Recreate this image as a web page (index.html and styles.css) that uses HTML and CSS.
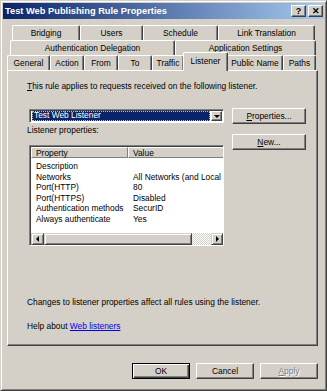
FILE: index.html
```html
<!DOCTYPE html>
<html lang="en">
<head>
    <meta charset="UTF-8">
    <title>Test Web Publishing Rule Properties</title>
    <link rel="stylesheet" href="styles.css">
</head>
<body>
    <div class="window">
        <div class="titlebar">
            <span class="title">Test Web Publishing Rule Properties</span>
            <div class="caption-btns">
                <div class="cap-btn">?</div>
                <div class="cap-btn">&#x2715;</div>
            </div>
        </div>

        <!-- tabs -->
        <div class="tabs">
            <div class="tab-row r1">
                <div class="tab w68">Bridging</div>
                <div class="tab w63">Users</div>
                <div class="tab w75">Schedule</div>
                <div class="tab w97">Link Translation</div>
            </div>
            <div class="tab-row r2">
                <div class="tab w165">Authentication Delegation</div>
                <div class="tab w141">Application Settings</div>
            </div>
            <div class="tab-row r3">
                <div class="tab w43">General</div>
                <div class="tab w34">Action</div>
                <div class="tab w34">From</div>
                <div class="tab w34">To</div>
                <div class="tab w32">Traffic</div>
                <div class="tab w43 active">Listener</div>
                <div class="tab w56">Public Name</div>
                <div class="tab w33">Paths</div>
            </div>
        </div>

        <div class="panel">
            <p class="intro"><u>T</u>his rule applies to requests received on the following listener.</p>

            <div class="listener-area">
                <div class="left-col">
                    <div class="combo">
                        <div class="combo-value"><span>Test Web Listener</span></div>
                        <div class="combo-arrow"><span class="tri-down"></span></div>
                    </div>
                    <div class="label">Listener properties:</div>
                    <div class="listview">
                        <div class="lv-header">
                            <div class="lv-col c1">Property</div>
                            <div class="lv-col c2">Value</div>
                        </div>
                        <div class="lv-body">
                            <div class="lv-row"><span class="c1">Description</span><span class="c2"></span></div>
                            <div class="lv-row"><span class="c1">Networks</span><span class="c2">All Networks (and Local</span></div>
                            <div class="lv-row"><span class="c1">Port(HTTP)</span><span class="c2">80</span></div>
                            <div class="lv-row"><span class="c1">Port(HTTPS)</span><span class="c2">Disabled</span></div>
                            <div class="lv-row"><span class="c1">Authentication methods</span><span class="c2">SecurID</span></div>
                            <div class="lv-row"><span class="c1">Always authenticate</span><span class="c2">Yes</span></div>
                        </div>
                        <div class="hscroll">
                            <div class="sb-btn"><span class="tri-left"></span></div>
                            <div class="sb-thumb"></div>
                            <div class="sb-track"></div>
                            <div class="sb-btn"><span class="tri-right"></span></div>
                        </div>
                    </div>
                </div>
                <div class="right-col">
                    <div class="btn"><u>P</u>roperties...</div>
                    <div class="btn"><u>N</u>ew...</div>
                </div>
            </div>

            <p class="note">Changes to listener properties affect all rules using the listener.</p>
            <p class="help">Help about <a href="#">Web listeners</a></p>
        </div>

        <div class="footer">
            <div class="btn default">OK</div>
            <div class="btn">Cancel</div>
            <div class="btn disabled"><u>A</u>pply</div>
        </div>
    </div>
</body>
</html>
```

FILE: styles.css
```css
*{
    padding: 0;
    margin: 0;
    box-sizing: border-box;
}
body{
    font-family: "Liberation Sans", Arial, sans-serif;
    font-size: 8.4px;
    color: #000;
    background: #D4D0C8;
}
/* 窗口外框 */
.window{
    width: 327px;
    height: 391px;
    background: #D4D0C8;
    border: 1px solid;
    border-color: #D4D0C8 #404040 #404040 #D4D0C8;
    box-shadow: inset 1px 1px #fff, inset -1px -1px #808080;
    padding: 2px;
}
/* 标题栏 */
.titlebar{
    height: 16px;
    display: flex;
    align-items: center;
    justify-content: space-between;
    padding-left: 2px;
    background: linear-gradient(to right, #0A246A, #A6CAF0);
}
.title{
    color: #fff;
    font-weight: bold;
    font-size: 9.3px;
}
.caption-btns{
    display: flex;
    gap: 2px;
    margin-right: 1px;
}
.cap-btn{
    width: 15px;
    height: 12px;
    background: #D4D0C8;
    border: 1px solid;
    border-color: #fff #404040 #404040 #fff;
    box-shadow: inset -1px -1px #808080;
    font-size: 9px;
    font-weight: bold;
    line-height: 10px;
    text-align: center;
}

/* 选项卡 */
.tabs{
    margin-top: 6px;
}
.tab-row{
    display: flex;
    height: 15px;
}
.r1{ padding-left: 9px; }
.r2{ padding-left: 7px; }
.r3{ padding-left: 4px; }
.tab{
    height: 15px;
    line-height: 14px;
    text-align: center;
    white-space: nowrap;
    border-top: 1px solid #fff;
    border-left: 1px solid #fff;
    border-right: 1px solid #404040;
    box-shadow: inset -1px 0 #808080;
    border-top-left-radius: 2px;
    border-top-right-radius: 2px;
}
.w68{ width: 68px; }
.w63{ width: 63px; }
.w75{ width: 75px; }
.w97{ width: 97px; }
.w165{ width: 165px; }
.w141{ width: 141px; }
.w43{ width: 43px; }
.w34{ width: 34px; }
.w32{ width: 32px; }
.w56{ width: 56px; }
.w33{ width: 33px; }
.tab.active{
    position: relative;
    z-index: 1;
    height: 19px;
    margin: -3px -1px -1px -1px;
    width: 45px;
    line-height: 16px;
    background: #D4D0C8;
}

/* 面板 */
.panel{
    margin: 0 6px 0 4px;
    height: 276px;
    border: 1px solid;
    border-color: #fff #404040 #404040 #fff;
    box-shadow: inset -1px -1px #808080;
    padding: 9px 0 0 19px;
}
.intro{
    line-height: 12px;
}
.listener-area{
    display: flex;
    gap: 8px;
    margin-top: 17px;
    padding-left: 2px;
}
.left-col{
    width: 195px;
}
.right-col{
    width: 74px;
    display: flex;
    flex-direction: column;
    gap: 10px;
    margin-top: -1px;
}

/* 下拉框 */
.combo{
    height: 14px;
    display: flex;
    background: #fff;
    border: 1px solid;
    border-color: #808080 #fff #fff #808080;
    box-shadow: inset 1px 1px #404040;
    padding: 1px 1px 1px 1px;
}
.combo-value{
    flex: 1;
    padding: 0 1px 0 1px;
}
.combo-value span{
    display: block;
    height: 10px;
    line-height: 9px;
    background: #0A246A;
    color: #fff;
    padding-left: 2px;
    outline: 1px dotted #E0C070;
    outline-offset: -1px;
}
.combo-arrow{
    width: 11px;
    background: #D4D0C8;
    border: 1px solid;
    border-color: #fff #404040 #404040 #fff;
    box-shadow: inset -1px -1px #808080;
    display: flex;
    align-items: center;
    justify-content: center;
}
.tri-down{
    width: 0;
    height: 0;
    border-left: 3px solid transparent;
    border-right: 3px solid transparent;
    border-top: 3px solid #000;
}
.label{
    line-height: 12px;
    margin-top: 1px;
    margin-left: -2px;
}

/* 列表 */
.listview{
    margin-top: 9px;
    height: 101px;
    background: #fff;
    border: 1px solid;
    border-color: #808080 #fff #fff #808080;
    box-shadow: inset 1px 1px #404040;
    padding: 1px 0 0 1px;
    display: flex;
    flex-direction: column;
}
.lv-header{
    display: flex;
    height: 11px;
    background: #D4D0C8;
}
.lv-col{
    line-height: 10px;
    padding-left: 4px;
    border: 1px solid;
    border-color: #fff #808080 #808080 #fff;
}
.lv-col.c1{ width: 97px; }
.lv-col.c2{ flex: 1; border-right: none; }
.lv-body{
    flex: 1;
    padding-top: 3px;
}
.lv-row{
    display: flex;
    height: 10.5px;
    line-height: 10.5px;
    white-space: nowrap;
    overflow: hidden;
}
.lv-row .c1{
    width: 97px;
    padding-left: 5px;
}
.lv-row .c2{
    padding-left: 5px;
}
.hscroll{
    display: flex;
    height: 12px;
}
.sb-btn{
    width: 13px;
    background: #D4D0C8;
    border: 1px solid;
    border-color: #D4D0C8 #404040 #404040 #D4D0C8;
    box-shadow: inset 1px 1px #fff, inset -1px -1px #808080;
    display: flex;
    align-items: center;
    justify-content: center;
}
.sb-btn:last-child{
    width: 12px;
}
.tri-left{
    border-top: 3px solid transparent;
    border-bottom: 3px solid transparent;
    border-right: 3px solid #000;
}
.tri-right{
    border-top: 3px solid transparent;
    border-bottom: 3px solid transparent;
    border-left: 3px solid #000;
}
.sb-thumb{
    width: 148px;
    background: #D4D0C8;
    border: 1px solid;
    border-color: #D4D0C8 #404040 #404040 #D4D0C8;
    box-shadow: inset 1px 1px #fff, inset -1px -1px #808080;
}
.sb-track{
    flex: 1;
    background-color: #fff;
    background-image: repeating-conic-gradient(#D4D0C8 0 25%, #fff 0 50%);
    background-size: 2px 2px;
}

.note{
    margin-top: 50px;
    line-height: 12px;
}
.help{
    margin-top: 12px;
    line-height: 12px;
}
.help a{
    color: #0000EE;
}

/* 按钮 */
.btn{
    height: 16px;
    line-height: 14px;
    text-align: center;
    background: #D4D0C8;
    border: 1px solid;
    border-color: #fff #404040 #404040 #fff;
    box-shadow: inset -1px -1px #808080;
}
.footer{
    display: flex;
    justify-content: flex-end;
    gap: 6px;
    margin-top: 17px;
    padding-right: 6px;
}
.footer .btn{
    width: 58px;
}
.btn.default{
    border: 1px solid #000;
    box-shadow: inset 1px 1px #fff, inset -1px -1px #404040, inset -2px -2px #808080;
}
.btn.disabled{
    color: #808080;
    text-shadow: 1px 1px #fff;
}
```
